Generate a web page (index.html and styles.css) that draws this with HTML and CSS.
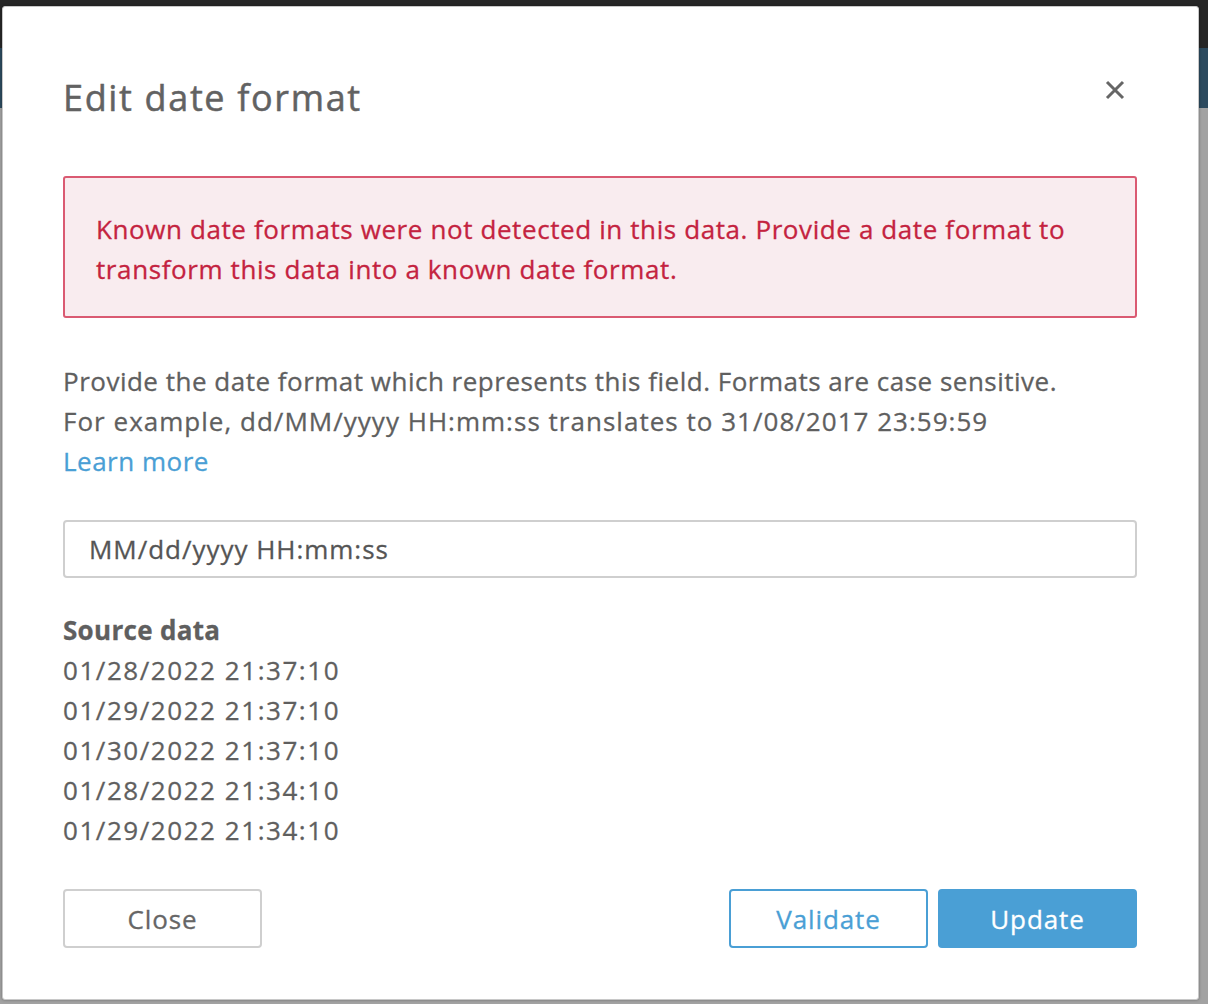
FILE: index.html
```html
<!DOCTYPE html>
<html lang="en">
<head>
<meta charset="utf-8">
<title>Edit date format</title>
<link rel="stylesheet" href="styles.css">
</head>
<body>
<div class="backdrop">
  <div class="bg-top"></div>
  <div class="bg-nav"></div>
  <div class="bg-page"></div>
</div>
<div class="modal" role="dialog" aria-labelledby="dlg-title">
  <div class="modal-header">
    <h1 id="dlg-title" class="modal-title">Edit date format</h1>
    <button class="close-x" aria-label="Close">
      <svg width="20" height="20" viewBox="0 0 20 20"><path d="M2 2 L18 18 M18 2 L2 18" stroke="#666" stroke-width="3" fill="none"/></svg>
    </button>
  </div>
  <div class="alert">Known date formats were not detected in this data. Provide a date format to transform this data into a known date format.</div>
  <p class="desc"><span>Provide the date format which represents this field. Formats are case sensitive.</span><br><span class="example">For example, dd/MM/yyyy HH:mm:ss translates to 31/08/2017 23:59:59</span><br><a class="link" href="#">Learn more</a></p>
  <input class="fmt-input" type="text" value="MM/dd/yyyy HH:mm:ss">
  <div class="source">
    <div class="source-title">Source data</div>
    <div class="date">01/28/2022 21:37:10</div>
    <div class="date">01/29/2022 21:37:10</div>
    <div class="date">01/30/2022 21:37:10</div>
    <div class="date">01/28/2022 21:34:10</div>
    <div class="date">01/29/2022 21:34:10</div>
  </div>
  <div class="footer">
    <button class="btn btn-default">Close</button>
    <div class="footer-right">
      <button class="btn btn-outline">Validate</button>
      <button class="btn btn-primary">Update</button>
    </div>
  </div>
</div>
</body>
</html>
```

FILE: styles.css
```css
* { box-sizing: border-box; }
html, body { margin: 0; padding: 0; }
body {
  width: 1208px;
  height: 1004px;
  overflow: hidden;
  position: relative;
  font-family: "Open Sans", "Noto Sans", sans-serif;
  background: #9f9f9f;
}
.backdrop { display: flex; flex-direction: column; height: 1004px; }
.bg-top { height: 48px; background: #262626; }
.bg-nav { height: 60px; background: #2c4a5e; }
.bg-page { flex: 1; background: #a2a2a2; }

.modal {
  position: absolute;
  left: 2px;
  top: 6px;
  width: 1197px;
  height: 994px;
  background: #fff;
  border: 1px solid #c8c8c8;
  border-radius: 3px;
  box-shadow: 0 0 3px rgba(0,0,0,0.35);
  padding: 67px 61px 0 60px;
  color: #5f5f5f;
  -webkit-text-stroke: 0.3px currentColor;
}
.modal-header {
  display: flex;
  justify-content: space-between;
  align-items: flex-start;
}
.modal-title {
  margin: 0;
  font-size: 36px;
  font-weight: 400;
  line-height: 48px;
  letter-spacing: 1.65px;
  color: #626262;
  -webkit-text-stroke: 0.5px currentColor;
}
.close-x {
  border: 0;
  background: none;
  padding: 0;
  margin: 6px 12px 0 0;
  width: 20px;
  height: 20px;
  display: flex;
}
.alert {
  margin-top: 54px;
  border: 2px solid #da5a72;
  background: #f9ecef;
  border-radius: 3px;
  padding: 31px 30px 27px 31px;
  color: #c42340;
  font-size: 26px;
  line-height: 40px;
  letter-spacing: 0.6px;
}
.desc {
  margin: 43px 0 0;
  font-size: 26px;
  line-height: 40px;
  letter-spacing: 0.5px;
  color: #5f5f5f;
}
.example { letter-spacing: 1.02px; }
.link { color: #4a9fd5; text-decoration: none; letter-spacing: 0.5px; }
.fmt-input {
  display: block;
  width: 100%;
  margin-top: 39px;
  height: 58px;
  border: 2px solid #cfcfcf;
  border-radius: 4px;
  padding: 0 24px;
  font-family: inherit;
  font-size: 26px;
  letter-spacing: 0.97px;
  color: #555;
  -webkit-text-stroke: 0.3px currentColor;
  outline: none;
}
.source {
  margin-top: 32px;
  font-size: 26px;
  line-height: 40px;
  color: #5f5f5f;
}
.source-title { font-weight: 700; letter-spacing: 0.3px; }
.date { letter-spacing: 1.55px; }
.footer {
  margin-top: 39px;
  display: flex;
  justify-content: space-between;
}
.footer-right { display: flex; gap: 10px; }
.btn {
  width: 199px;
  height: 59px;
  border-radius: 4px;
  font-family: inherit;
  font-size: 26px;
  letter-spacing: 0.9px;
  padding: 0;
  cursor: pointer;
  -webkit-text-stroke: 0.3px currentColor;
}
.btn-default { border: 2px solid #cfcfcf; background: #fff; color: #666; }
.btn-outline { border: 2px solid #4a9fd5; background: #fff; color: #4a9fd5; }
.btn-primary { border: 2px solid #4a9fd5; background: #4a9fd5; color: #fff; }
```
